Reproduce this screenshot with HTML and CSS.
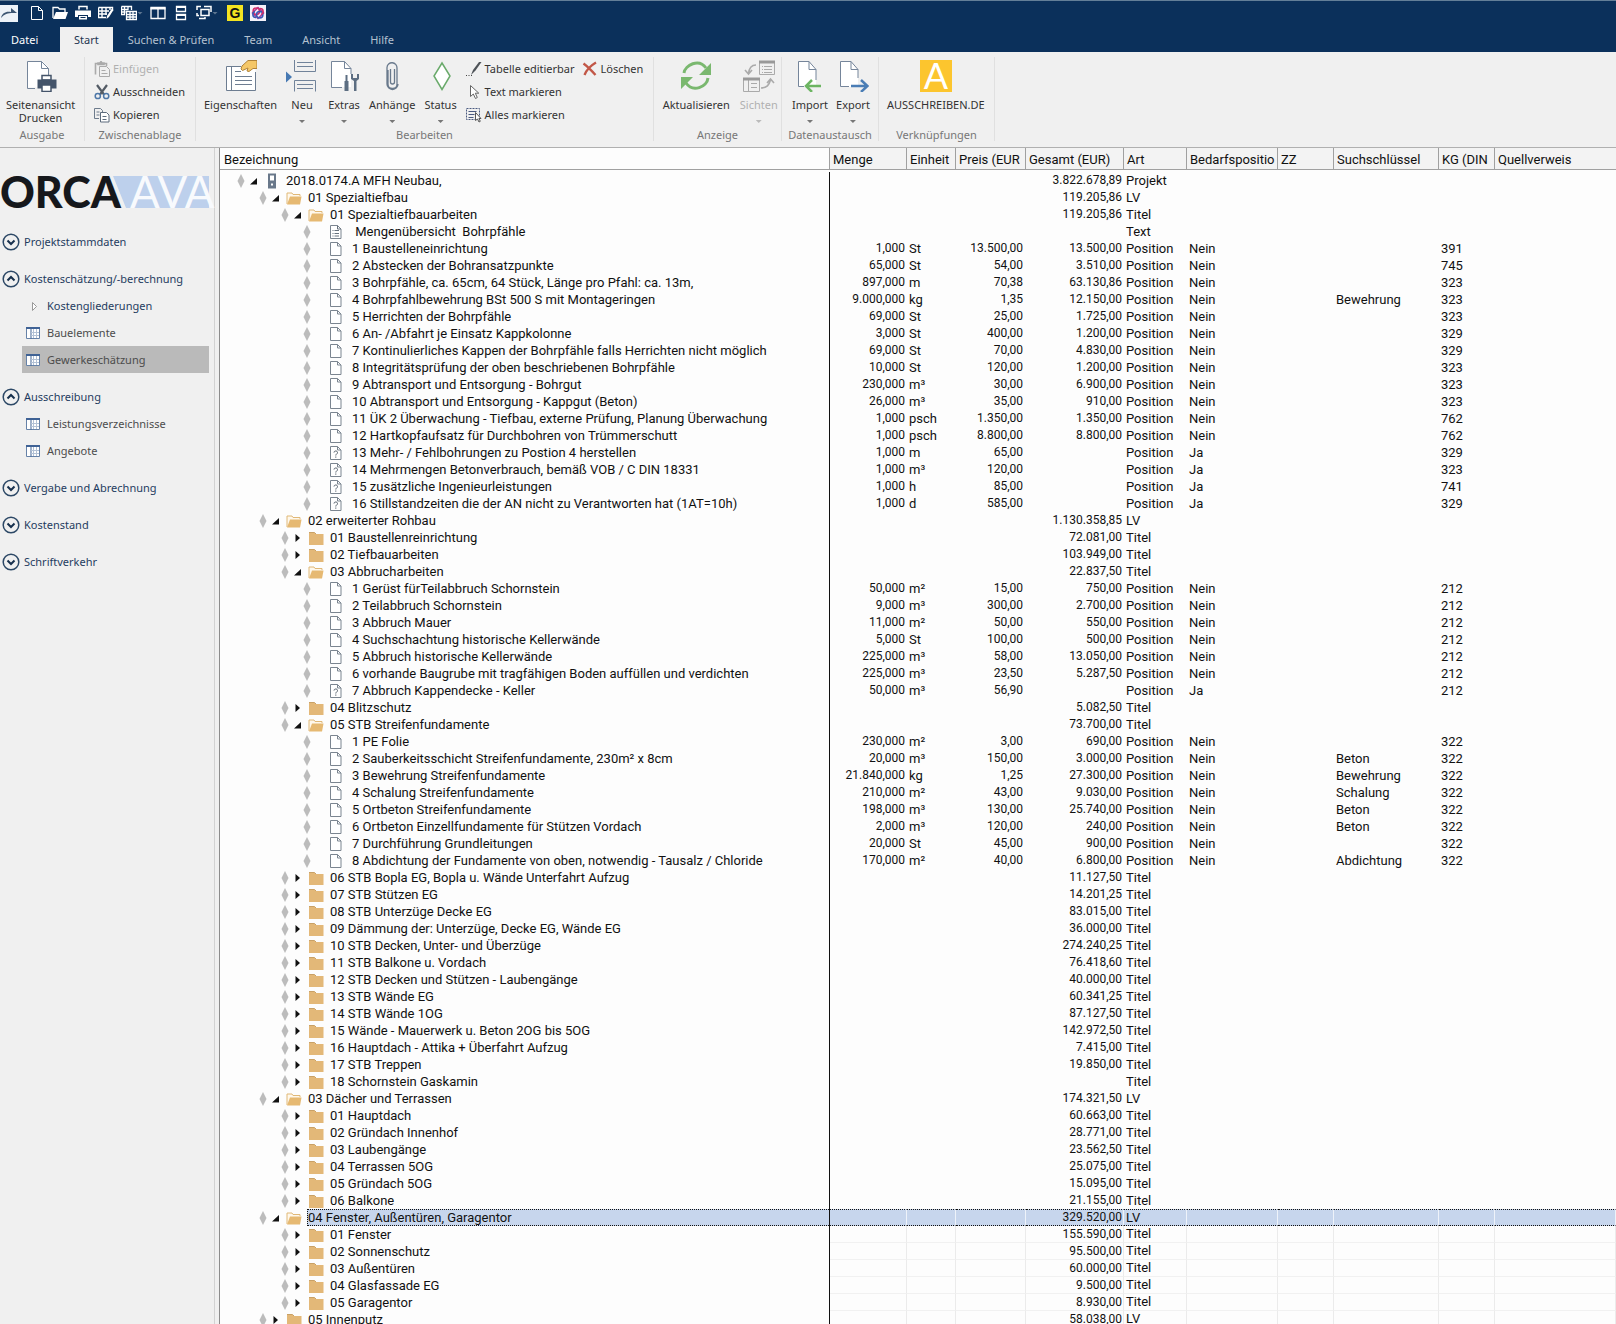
FILE: index.html
```html
<!DOCTYPE html>
<html lang="de">
<head>
<meta charset="utf-8">
<title>ORCA AVA</title>
<link rel="stylesheet" href="styles.css">
</head>
<body>
<svg class="sprite" aria-hidden="true">
  <symbol id="i-open" viewBox="0 0 16 16"><path d="M1 14V3h5l1 1.5h7V6" fill="#fff8ec" stroke="#e0b877"/><path d="M1 14.5 4 6.5h11.5L14 14.5z" fill="#e6b972"/></symbol>
  <symbol id="i-folder" viewBox="0 0 16 16"><path d="M1 2.500h5.500L8 4h7.500v11H1z" fill="#e3b878"/><path d="M1 2.500h5.500L8 4" fill="none" stroke="#c9a166"/></symbol>
  <symbol id="i-doc" viewBox="0 0 16 16"><path d="M.5 1.500h7l3.500 3.500v9.500H.5z" fill="#fff" stroke="#7b8590"/><path d="M7.500 1.500V5H11" fill="none" stroke="#7b8590"/></symbol>
  <symbol id="i-ask" viewBox="0 0 16 16"><path d="M.5 1.500h7l3.500 3.500v9.500H.5z" fill="#fff" stroke="#7b8590"/><path d="M7.500 1.500V5H11" fill="none" stroke="#7b8590"/><path d="M4 7.500c0-2 3.500-2 3.500 0C7.500 9 5.800 9 5.800 10.500M5.800 11.500v1.200" fill="none" stroke="#4f5a66"/></symbol>
  <symbol id="i-text" viewBox="0 0 16 16"><path d="M.5 1.500h7l3.500 3.500v9.500H.5z" fill="#fff" stroke="#7b8590"/><path d="M7.500 1.500V5H11M2.500 6.500h1m1 0h4.500m-6.500 3h1m1 0h4.500m-6.500 2.500h1m1 0h4.500" fill="none" stroke="#66717d"/></symbol>
  <symbol id="i-project" viewBox="0 0 16 16"><path d="M4 .5h8v15H4z" fill="#69788a"/><path d="M6 2.500h4v5H6z" fill="#fff"/><path d="M7 10.500h2v2H7z" fill="#fff"/></symbol>
  <symbol id="i-gem" viewBox="0 0 8 14"><path d="M4 0 7.500 7 4 14 .5 7z" fill="#bcbcbc"/></symbol>
  <symbol id="i-expanded" viewBox="0 0 7 8"><path d="M7 1v6.500H0z" fill="#111"/></symbol>
  <symbol id="i-collapsed" viewBox="0 0 7 8"><path d="M1.500 0 6 4 1.500 8z" fill="#111"/></symbol>
  <symbol id="i-down" viewBox="0 0 18 18"><circle cx="9" cy="9" r="7.800" fill="none" stroke="#2c4866" stroke-width="1.500"/><path d="m5.500 7.500 3.500 3.500 3.500-3.500" fill="none" stroke="#17304d" stroke-width="2"/></symbol>
  <symbol id="i-up" viewBox="0 0 18 18"><circle cx="9" cy="9" r="7.800" fill="none" stroke="#2c4866" stroke-width="1.500"/><path d="m5.500 10.500 3.500-3.500 3.500 3.500" fill="none" stroke="#17304d" stroke-width="2"/></symbol>
  <symbol id="i-list" viewBox="0 0 14 12"><path d="M.5 1h13v10.500H.5z" fill="#fff" stroke="#6682a8"/><path d="M0 1h14" stroke="#3f6295" stroke-width="2"/><path d="M5 2v9.500" stroke="#3f6295"/><path d="M7.500 2v9M10.500 2v9M5 5.500h8M5 8.500h8" stroke="#b3c2d6"/></symbol>
</svg>

<div class="app">
  <header class="top">
    <div class="quick">
      <span class="app-mark"><svg viewBox="0 0 18 18" width="18" height="18"><path d="M0 1h18v17H0z" fill="#edf2f8"/><path d="M1 14c1-5 5-7 10-6V4l6 5h-4C8 9 4 10 1 14z" fill="#3d5673"/></svg></span>
      <button title="Neu"><svg viewBox="0 0 16 16"><path d="M2.500 1.500h7l4 4v9h-11zM9.500 1.500v4h4" fill="none" stroke="#fff"/></svg></button>
      <button title="Öffnen"><svg viewBox="0 0 16 16"><path d="M1 13V2.500h5L7.500 4H13v3" fill="none" stroke="#fff" stroke-width="1.300"/><path d="M1 14 4 7h12l-2.500 7z" fill="#fff"/></svg></button>
      <button title="Drucken"><svg viewBox="0 0 16 16"><path d="M4 4.500V1.500h8v3" fill="none" stroke="#fff" stroke-width="1.500"/><path d="M0 5.500h16V12h-3v-2H3v2H0zM4 11h8v3.500H4z" fill="#fff"/><path d="M5.500 12.500h5" stroke="#0d305b"/></svg></button>
      <button title="Tabelle bearbeiten"><svg viewBox="0 0 16 16"><path d="M.5 2.500h14v3M.5 2.500v10H8M.5 6H11M.5 9H9M4 2.500v10M8 2.500V10M12 2.500V5" fill="none" stroke="#fff" stroke-width="1.400"/><path d="M15.500 5 11 12l-2.500 2L9 11l4.500-7z" fill="#fff"/></svg></button>
      <button title="Tabelle kopieren"><svg viewBox="0 0 16 16"><path d="M.5 1.500h10V5M.5 1.500v8H4M.5 4.500h7M.5 7h4M3.500 1.500v8M7 1.500V5M5.500 6.500h10v8h-10zM5.500 9.500h10M5.500 12h10M9 6.500v8M12 6.500v8" fill="none" stroke="#fff" stroke-width="1.300"/></svg><i class="caret"></i></button>
      <button title="Nebeneinander"><svg viewBox="0 0 16 16"><path d="M1 2.500h14v11H1zM8 2.500v11" fill="none" stroke="#fff" stroke-width="1.300"/><path d="M.5 3.500h15" stroke="#fff" stroke-width="2"/></svg></button>
      <button title="Untereinander"><svg viewBox="0 0 16 16"><path d="M3.500 1.500h9v5h-9zM3.500 9.500h9v5h-9z" fill="none" stroke="#fff" stroke-width="1.300"/><path d="M3 2h10M3 10h10" stroke="#fff" stroke-width="2"/></svg></button>
      <button title="Fenster anordnen"><svg viewBox="0 0 16 16"><path d="M5 4.500h8v6H5zM1 5V1.500h4M8 1.500h7V7M1 8v2.500h2M3 13.500h6V12" fill="none" stroke="#fff" stroke-width="1.500"/></svg><i class="caret"></i></button>
      <button title="GAEB" class="g-mark">G</button>
      <button title="IFC"><svg viewBox="0 0 16 16"><path d="M0 0h16v16H0z" fill="#f4f2fa"/><g fill="none" stroke-width="1.500"><path d="M8 2.500 13.500 8 8 13.500 2.500 8z" stroke="#a23a9c"/><circle cx="6.300" cy="6.300" r="3.200" stroke="#d22c6a"/><circle cx="9.700" cy="9.700" r="3.200" stroke="#3a57b4"/><path d="M10 3.500c4 0 4 5 1 6" stroke="#d22c6a"/><path d="M6 12.500c-4 0-4-5-1-6" stroke="#3a57b4"/></g></svg></button>
    </div>
    <nav class="tabs">
      <a href="#" class="file">Datei</a><a href="#" class="active">Start</a><a href="#">Suchen &amp; Prüfen</a><a href="#">Team</a><a href="#">Ansicht</a><a href="#">Hilfe</a>
    </nav>
  </header>

  <div class="ribbon">
    <section class="group g-output">
      <div class="tools">
        <button class="big"><svg viewBox="0 0 32 32"><path d="M2.500 1.500h15l6 6v20h-21z" fill="#fff"/><path d="M10 28.500H2.500v-27h14l7 7V15M16.500 1.500v7h7" fill="none" stroke="#75859a"/><path d="M17 15.500h9V20h-9z" fill="#fff" stroke="#44546a" stroke-width="1.500"/><path d="M12.500 19.500h19v9h-19z" fill="#44546a"/><path d="M17 25h9v6.500h-9z" fill="#fff" stroke="#44546a" stroke-width="1.500"/></svg><span>Seitenansicht<br>Drucken</span></button>
      </div>
      <h2>Ausgabe</h2>
    </section>
    <section class="group g-clip">
      <div class="tools stack">
        <button class="small" disabled><svg viewBox="0 0 16 16"><path d="M1.500 13.500v-11h11V5M4 3.500V2h2l1-1.500L8 2h2v1.500z" fill="none" stroke="#aaa" stroke-width="1.600"/><path d="M5.500 5.500h7l3 3v7h-10zM7.500 9.500h4m-4 3h6" fill="#f0f0f0" stroke="#aaa"/></svg>Einfügen</button>
        <button class="small"><svg viewBox="0 0 16 16"><path d="m3 1 7 9.500M13 1 6 10.500" stroke="#535b65" stroke-width="2.200"/><circle cx="3.800" cy="12" r="2.600" fill="none" stroke="#4d77a8" stroke-width="1.500"/><circle cx="12.200" cy="12" r="2.600" fill="none" stroke="#4d77a8" stroke-width="1.500"/></svg>Ausschneiden</button>
        <button class="small"><svg viewBox="0 0 16 16"><path d="M5 11.500H.5v-10h6l2 2V5M2.500 5h3m-3 3h3" fill="none" stroke="#6d7b8c"/><path d="M6.500 5.500h6l2.500 2.500v7H6.500zM8.500 9.500h4m-4 3h4" fill="#fff" stroke="#5d6b7c"/></svg>Kopieren</button>
      </div>
      <h2>Zwischenablage</h2>
    </section>
    <section class="group g-edit">
      <div class="tools">
        <button class="big"><svg viewBox="0 0 32 32"><path d="M1.500 6.500h29v24h-29z" fill="#fff"/><path d="M16 6.500H1.500v24h29V12M6.500 6.500v24M10 11.500h6m-6 5h17m-17 4h17m-17 4h17" fill="none" stroke="#6d7d91"/><path d="M32 .5H23l-6 5.500-1 3 1.500 1.500L23 8l-1 3 2 .5 4-3h4z" fill="#f5c767" stroke="#b08339"/></svg><span>Eigenschaften</span></button>
        <button class="big"><svg viewBox="0 0 32 32"><path d="M0 11.500 6 17l-6 5.500z" fill="#4779b3"/><path d="M8.500 0v11.500h21V0M11 2.500h16m-16 4h16M8.500 31.500v-11h21v11M11 24.500h16m-16 4h16" fill="none" stroke="#71839a"/></svg><span>Neu</span><i class="caret"></i></button>
        <button class="big"><svg viewBox="0 0 32 32"><path d="M3.500 1.500H16l7 7V27h-19.500z" fill="#fff"/><path d="M14 27.500H3.500v-26h13l6.500 7V14M16.500 1.500v7H23" fill="none" stroke="#75859a"/><path d="M18.500 15v6" stroke="#5d6e82" stroke-width="2"/><path d="M18.500 21v10" stroke="#5d6e82" stroke-width="4"/><path d="M26 31V21l-3-2v-5l2 0v4h4v-4h2v5l-2.500 2v10z" fill="#5d6e82"/></svg><span>Extras</span><i class="caret"></i></button>
        <button class="big"><svg viewBox="0 0 32 32"><path d="M12 10v14a4.500 4.500 0 0 0 9 0V8a5 5 0 0 0-10-.5V24a5.500 5.500 0 0 0 11 0M18.500 9v13a2 2 0 0 1-4 0V9" fill="none" stroke="#69798c" stroke-width="1.300"/></svg><span>Anhänge</span><i class="caret"></i></button>
        <button class="big"><svg viewBox="0 0 32 32"><path d="M17 3 25 16 17 29.500 9 16z" fill="#fff" stroke="#6aaa6b" stroke-width="1.500"/></svg><span>Status</span><i class="caret"></i></button>
        <div class="stack">
          <button class="small"><svg viewBox="0 0 16 16"><path d="M0 14.500h7" stroke="#444" stroke-dasharray="1 1.500"/><path d="M15.500 1 9.500 9.500 5 14l2-5 6-8z" fill="#4e5358"/></svg>Tabelle editierbar</button>
          <button class="small"><svg viewBox="0 0 16 16"><path d="M4.500 1.500v11l2.800-2.500 2.200 4.500 1.800-1-2-4.300h3.500z" fill="#fff" stroke="#666"/></svg>Text markieren</button>
          <button class="small"><svg viewBox="0 0 16 16"><path d="M.5 1.500h13v11H.5z" fill="none" stroke="#4a5a80" stroke-dasharray="2 1"/><path d="M2.500 4.500h8m-8 3h6m-6 3h5" stroke="#4a5a80"/><path d="M9.500 5.500v8l2-1.500 1.500 3 1.300-.7-1.400-2.800H15z" fill="#fff" stroke="#555"/></svg>Alles markieren</button>
        </div>
        <div class="stack">
          <button class="small"><svg viewBox="0 0 16 16"><path d="M1.500 2.500c4 3 8 7 12 11.500M14 1.500C8 5 4 10 2.500 14" fill="none" stroke="#c25747" stroke-width="2.300"/></svg>Löschen</button>
        </div>
      </div>
      <h2>Bearbeiten</h2>
    </section>
    <section class="group g-view">
      <div class="tools">
        <button class="big"><svg viewBox="0 0 32 32"><path d="M4 13C5 5 19-2 26 8M28 18c-1 9-15 15-22 5" fill="none" stroke="#7ab86f" stroke-width="3"/><path d="M31 3v12H19zM1 29V17h12z" fill="#7ab86f"/></svg><span>Aktualisieren</span></button>
        <button class="big" disabled><svg viewBox="0 0 32 32"><path d="M16.500 1.500h15v13h-15zM.500 18.500h16v13H.500zM5.500 18.500v13M8 23.500h6m-6 4h6M19 6.500h1m1 0h8m-10 3h1m1 0h8m-10 3h1m1 0h8" fill="none" stroke="#aaa"/><path d="M16 2h16M0 19h17" stroke="#999" stroke-width="3"/><path d="M13 5C8 5 6 8 5.500 14M2 10l3.500 4L9 10M18 28c6 0 8-3 9.500-8M24 23l3.500-4 3.500 4" fill="none" stroke="#aaa" stroke-width="1.600"/></svg><span>Sichten</span><i class="caret"></i></button>
      </div>
      <h2>Anzeige</h2>
    </section>
    <section class="group g-data">
      <div class="tools">
        <button class="big"><svg viewBox="0 0 32 32"><path d="M4.500 1.500H15l7 8V27H4.500z" fill="#fff"/><path d="M10 26.500H4.500v-25h10.500l7 8V20M15 1.500v8h7" fill="none" stroke="#75859a"/><path d="M27 26H12M18 20l-6 6 6 6" fill="none" stroke="#6db562" stroke-width="2.500"/></svg><span>Import</span><i class="caret"></i></button>
        <button class="big"><svg viewBox="0 0 32 32"><path d="M3.500 1.500H14l7 8V27H3.500z" fill="#fff"/><path d="M12 26.500H3.500v-25H14l7 8V18M14 1.500v8h7" fill="none" stroke="#75859a"/><path d="M14 26h16M24 20l6.500 6-6.500 6" fill="none" stroke="#4a7db5" stroke-width="2.500"/></svg><span>Export</span><i class="caret"></i></button>
      </div>
      <h2>Datenaustausch</h2>
    </section>
    <section class="group g-link">
      <div class="tools">
        <button class="big"><span class="a-mark">A</span><span>AUSSCHREIBEN.DE</span></button>
      </div>
      <h2>Verknüpfungen</h2>
    </section>
  </div>

  <div class="work">
    <aside class="side">
      <svg class="logo" viewBox="0 0 207 32" role="img" aria-label="ORCA AVA">
        <path d="M111 0h96v32H124z" fill="#bdd0ec"/>
        <text x="-2" y="32" class="logo-orca">ORCA</text>
        <text x="128" y="32" class="logo-ava">AVA</text>
      </svg>
      <nav>
        <a href="#" class="head"><svg><use href="#i-down"/></svg>Projektstammdaten</a>
        <a href="#" class="head"><svg><use href="#i-up"/></svg>Kostenschätzung/-berechnung</a>
        <a href="#" class="sub navy"><svg viewBox="0 0 14 12"><path d="m6.500 2.500 4 4-4 4z" fill="#fff" stroke="#999"/></svg>Kostengliederungen</a>
        <a href="#" class="sub"><svg><use href="#i-list"/></svg>Bauelemente</a>
        <a href="#" class="sub current"><svg><use href="#i-list"/></svg>Gewerkeschätzung</a>
        <a href="#" class="head"><svg><use href="#i-up"/></svg>Ausschreibung</a>
        <a href="#" class="sub"><svg><use href="#i-list"/></svg>Leistungsverzeichnisse</a>
        <a href="#" class="sub"><svg><use href="#i-list"/></svg>Angebote</a>
        <a href="#" class="head"><svg><use href="#i-down"/></svg>Vergabe und Abrechnung</a>
        <a href="#" class="head"><svg><use href="#i-down"/></svg>Kostenstand</a>
        <a href="#" class="head"><svg><use href="#i-down"/></svg>Schriftverkehr</a>
      </nav>
    </aside>
    <main class="sheet">
      <table>
        <colgroup><col class="c-name"><col class="c-menge"><col class="c-einheit"><col class="c-preis"><col class="c-gesamt"><col class="c-art"><col class="c-bedarf"><col class="c-zz"><col class="c-such"><col class="c-kg"><col></colgroup>
        <thead><tr><th>Bezeichnung</th><th>Menge</th><th>Einheit</th><th>Preis (EUR</th><th>Gesamt (EUR)</th><th>Art</th><th>Bedarfspositio</th><th>ZZ</th><th>Suchschlüssel</th><th>KG (DIN</th><th>Quellverweis</th></tr></thead>
        <tbody id="rows"></tbody>
      </table>
    </main>
  </div>
</div>
<script src="app.js"></script>
</body>
</html>
```
FILE: styles.css
```css
* { box-sizing: border-box; }
body { margin: 0; background: #f0f0f0; color: #333; font: 11px/13px "Noto Sans", "Open Sans", sans-serif; }
button { margin: 0; padding: 0; border: 0; background: none; color: inherit; font: inherit; }
a { color: inherit; text-decoration: none; }
h2 { margin: 0; font: inherit; }
svg { flex: none; }
.sprite { position: absolute; width: 0; height: 0; }
.app { display: flex; flex-direction: column; height: 100vh; overflow: hidden; }

.top { background: #0b305b; border-top: 1px solid #647f98; color: #b4c1d0; }
.quick { display: flex; align-items: center; gap: 7px; height: 24px; }
.quick button { display: flex; align-items: center; height: 16px; color: #fff; }
.quick svg { width: 16px; height: 16px; }
.app-mark { display: flex; margin-right: 4px; }
.app-mark svg { width: 18px; height: 18px; }
.caret { flex: none; width: 6px; height: 3px; background: #777; clip-path: polygon(0 0, 100% 0, 50% 100%); }
.quick .caret { background: #5d7590; }
.quick .g-mark { justify-content: center; width: 16px; margin-left: 2px; background: #f3e321; color: #111; font: 700 14px/16px "Liberation Sans", sans-serif; }
.tabs { display: flex; height: 27px; padding-top: 2px; }
.tabs a { padding: 0 15px; line-height: 26px; }
.tabs .file { width: 50px; margin-right: 10px; padding: 0 11px; color: #fff; }
.tabs .active { padding: 0 14px; background: #f0f0f0; color: #1d3550; }

.ribbon { display: flex; flex: none; height: 96px; border-bottom: 1px solid #b0b0b0; }
.group { display: flex; flex: none; flex-direction: column; margin: 5px 0 6px; border-right: 1px solid #e0e0e0; }
.group h2 { color: #777; text-align: center; }
.tools { display: flex; flex: 1; padding-left: 4px; }
.g-output { width: 85px; }
.g-output .tools { padding-left: 2px; }
.g-clip { width: 111px; }
.g-edit { width: 458px; }
.g-view { width: 128px; }
.g-view .tools, .g-data .tools { padding-left: 6px; }
.g-view .tools { gap: 4px; }
.g-data { width: 97px; }
.g-link { width: 116px; }
.big { display: flex; flex-direction: column; align-items: center; align-self: flex-start; min-width: 42px; padding: 3px 4px 0; }
.big svg, .a-mark { width: 32px; height: 32px; margin-bottom: 6px; }
.big .caret { margin-top: 9px; }
.big span { white-space: nowrap; }
.big .a-mark { background: #fcc52e; color: #fff; font: 400 36px/31px Lato, sans-serif; }
.stack { display: flex; flex-direction: column; }
.g-clip .stack { padding-left: 9px; }
.small { display: flex; align-items: center; gap: 3px; height: 23px; white-space: nowrap; }
.g-edit .stack { padding-left: 4px; }
.g-edit .stack + .stack { padding-left: 7px; }
.small svg { width: 16px; height: 16px; }
button:disabled { color: #b0b0b0; }
button:disabled .caret { background: #bbb; }

.work { display: flex; flex: 1; min-height: 0; }
.side { flex: none; width: 215px; padding: 28px 5px 0 2px; border-right: 1px solid #d2d2d2; }
.logo { display: block; width: 207px; height: 32px; margin-bottom: 20px; overflow: visible; }
.logo-orca { fill: #16181c; font: 900 43px Lato, sans-serif; }
.logo-ava { fill: #f8fafd; font: 400 44px Lato, sans-serif; }
.side a { display: flex; align-items: center; height: 27px; }
.head { gap: 4px; margin-top: 10px; color: #1f3c60; }
.head svg { width: 18px; height: 18px; }
.sub { gap: 7px; margin-left: 20px; padding-left: 4px; color: #4c4c4c; }
.sub svg { width: 14px; height: 12px; }
.side .navy { color: #1f3c60; }
.side .current { background: #bababa; }

.sheet { flex: 1; min-width: 0; margin-left: 4px; overflow: hidden; background: #fdfdfd; border-left: 1px solid #8c8c8c; color: #111; font: 13px/17px Roboto, sans-serif; }
table { width: 100%; table-layout: fixed; border-spacing: 0; }
.c-name { width: 610px; }
.c-menge { width: 77px; }
.c-einheit { width: 49px; }
.c-preis { width: 70px; }
.c-gesamt { width: 98px; }
.c-art { width: 63px; }
.c-bedarf { width: 91px; }
.c-zz { width: 56px; }
.c-such { width: 105px; }
.c-kg { width: 56px; }
th, td { overflow: hidden; padding: 0 3px; text-align: left; font-weight: 400; white-space: nowrap; }
th { height: 22px; padding-top: 3px; background: #f3f3f3; border-right: 1px solid #a0a0a0; border-bottom: 1px solid #a0a0a0; line-height: 18px; }
th:first-child { padding-left: 4px; background: #fdfdfd; }
th:last-child { border-right: 0; }
tbody::before { content: ""; display: block; height: 2px; }
td { height: 17px; }
td + td { padding-left: 2px; border-right: 1px solid transparent; }
td:first-child { padding: 0; border-right: 1px solid #111; }
td.num { text-align: right; font-size: 12px; padding-right: 2px; }
td.menge, td.gesamt { padding-right: 1px; }
.node { display: flex; align-items: center; height: 17px; padding-left: 17px; }
.node.level1 { padding-left: 39px; }
.node.level2 { padding-left: 61px; }
.node.level3 { padding-left: 83px; }
.gem { width: 8px; height: 14px; }
.twist { width: 7px; height: 8px; margin: 0 7px 0 5px; }
.icon { width: 16px; height: 16px; margin-right: 5px; }
.label { flex: 1; height: 17px; padding-left: 1px; line-height: 17px; white-space: pre; }
.selected td + td, .selected .label { background: #c7d6ed; border-top: 1px dotted #111; border-bottom: 1px dotted #111; line-height: 15px; }
.selected .label { border-left: 1px dotted #111; padding-left: 0; }
.selected td + td { border-right-color: #eef3fa; }
.selected ~ tr td + td { border-right-color: #ebebeb; border-bottom: 1px solid #f1f1f1; line-height: 16px; }
```
FILE: app.js
```js
// One line per tree row:
// level | icon | text | Menge | Einheit | Preis | Gesamt | Art | Bedarf | Suchschlüssel | KG
const data = `
0|project|2018.0174.A MFH Neubau,||||3.822.678,89|Projekt
1|open|01 Spezialtiefbau||||119.205,86|LV
2|open|01 Spezialtiefbauarbeiten||||119.205,86|Titel
3|text| Mengenübersicht  Bohrpfähle|||||Text
3|doc|1 Baustelleneinrichtung|1,000|St|13.500,00|13.500,00|Position|Nein||391
3|doc|2 Abstecken der Bohransatzpunkte|65,000|St|54,00|3.510,00|Position|Nein||745
3|doc|3 Bohrpfähle, ca. 65cm, 64 Stück, Länge pro Pfahl: ca. 13m,|897,000|m|70,38|63.130,86|Position|Nein||323
3|doc|4 Bohrpfahlbewehrung BSt 500 S mit Montageringen|9.000,000|kg|1,35|12.150,00|Position|Nein|Bewehrung|323
3|doc|5 Herrichten der Bohrpfähle|69,000|St|25,00|1.725,00|Position|Nein||323
3|doc|6 An- /Abfahrt je Einsatz Kappkolonne|3,000|St|400,00|1.200,00|Position|Nein||329
3|doc|7 Kontinulierliches Kappen der Bohrpfähle falls Herrichten nicht möglich|69,000|St|70,00|4.830,00|Position|Nein||329
3|doc|8 Integritätsprüfung der oben beschriebenen Bohrpfähle|10,000|St|120,00|1.200,00|Position|Nein||323
3|doc|9 Abtransport und Entsorgung - Bohrgut|230,000|m³|30,00|6.900,00|Position|Nein||323
3|doc|10 Abtransport und Entsorgung - Kappgut (Beton)|26,000|m³|35,00|910,00|Position|Nein||323
3|doc|11 ÜK 2 Überwachung - Tiefbau, externe Prüfung, Planung Überwachung|1,000|psch|1.350,00|1.350,00|Position|Nein||762
3|doc|12 Hartkopfaufsatz für Durchbohren von Trümmerschutt|1,000|psch|8.800,00|8.800,00|Position|Nein||762
3|ask|13 Mehr- / Fehlbohrungen zu Postion 4 herstellen|1,000|m|65,00||Position|Ja||329
3|ask|14 Mehrmengen Betonverbrauch, bemäß VOB / C DIN 18331|1,000|m³|120,00||Position|Ja||323
3|ask|15 zusätzliche Ingenieurleistungen|1,000|h|85,00||Position|Ja||741
3|ask|16 Stillstandzeiten die der AN nicht zu Verantworten hat (1AT=10h)|1,000|d|585,00||Position|Ja||329
1|open|02 erweiterter Rohbau||||1.130.358,85|LV
2|folder|01 Baustellenreinrichtung||||72.081,00|Titel
2|folder|02 Tiefbauarbeiten||||103.949,00|Titel
2|open|03 Abbrucharbeiten||||22.837,50|Titel
3|doc|1 Gerüst fürTeilabbruch Schornstein|50,000|m²|15,00|750,00|Position|Nein||212
3|doc|2 Teilabbruch Schornstein|9,000|m³|300,00|2.700,00|Position|Nein||212
3|doc|3 Abbruch Mauer|11,000|m²|50,00|550,00|Position|Nein||212
3|doc|4 Suchschachtung historische Kellerwände|5,000|St|100,00|500,00|Position|Nein||212
3|doc|5 Abbruch historische Kellerwände|225,000|m³|58,00|13.050,00|Position|Nein||212
3|doc|6 vorhande Baugrube mit tragfähigen Boden auffüllen und verdichten|225,000|m³|23,50|5.287,50|Position|Nein||212
3|ask|7 Abbruch Kappendecke - Keller|50,000|m³|56,90||Position|Ja||212
2|folder|04 Blitzschutz||||5.082,50|Titel
2|open|05 STB Streifenfundamente||||73.700,00|Titel
3|doc|1 PE Folie|230,000|m²|3,00|690,00|Position|Nein||322
3|doc|2 Sauberkeitsschicht Streifenfundamente, 230m² x 8cm|20,000|m³|150,00|3.000,00|Position|Nein|Beton|322
3|doc|3 Bewehrung Streifenfundamente|21.840,000|kg|1,25|27.300,00|Position|Nein|Bewehrung|322
3|doc|4 Schalung Streifenfundamente|210,000|m²|43,00|9.030,00|Position|Nein|Schalung|322
3|doc|5 Ortbeton Streifenfundamente|198,000|m³|130,00|25.740,00|Position|Nein|Beton|322
3|doc|6 Ortbeton Einzellfundamente für Stützen Vordach|2,000|m³|120,00|240,00|Position|Nein|Beton|322
3|doc|7 Durchführung Grundleitungen|20,000|St|45,00|900,00|Position|Nein||322
3|doc|8 Abdichtung der Fundamente von oben, notwendig - Tausalz / Chloride|170,000|m²|40,00|6.800,00|Position|Nein|Abdichtung|322
2|folder|06 STB Bopla EG, Bopla u. Wände Unterfahrt Aufzug||||11.127,50|Titel
2|folder|07 STB Stützen EG||||14.201,25|Titel
2|folder|08 STB Unterzüge Decke EG||||83.015,00|Titel
2|folder|09 Dämmung der: Unterzüge, Decke EG, Wände EG||||36.000,00|Titel
2|folder|10 STB Decken, Unter- und Überzüge||||274.240,25|Titel
2|folder|11 STB Balkone u. Vordach||||76.418,60|Titel
2|folder|12 STB Decken und Stützen - Laubengänge||||40.000,00|Titel
2|folder|13 STB Wände EG||||60.341,25|Titel
2|folder|14 STB Wände 1OG||||87.127,50|Titel
2|folder|15 Wände - Mauerwerk u. Beton 2OG bis 5OG||||142.972,50|Titel
2|folder|16 Hauptdach - Attika + Überfahrt Aufzug||||7.415,00|Titel
2|folder|17 STB Treppen||||19.850,00|Titel
2|folder|18 Schornstein Gaskamin|||||Titel
1|open|03 Dächer und Terrassen||||174.321,50|LV
2|folder|01 Hauptdach||||60.663,00|Titel
2|folder|02 Gründach Innenhof||||28.771,00|Titel
2|folder|03 Laubengänge||||23.562,50|Titel
2|folder|04 Terrassen 5OG||||25.075,00|Titel
2|folder|05 Gründach 5OG||||15.095,00|Titel
2|folder|06 Balkone||||21.155,00|Titel
1|open|04 Fenster, Außentüren, Garagentor||||329.520,00|LV
2|folder|01 Fenster||||155.590,00|Titel
2|folder|02 Sonnenschutz||||95.500,00|Titel
2|folder|03 Außentüren||||60.000,00|Titel
2|folder|04 Glasfassade EG||||9.500,00|Titel
2|folder|05 Garagentor||||8.930,00|Titel
1|folder|05 Innenputz||||58.038,00|LV`;

const selectedText = "04 Fenster, Außentüren, Garagentor";
const icon = (cls, name) => `<svg class="${cls}">${name ? `<use href="#i-${name}"/>` : ""}</svg>`;
const twist = { project: "expanded", open: "expanded", folder: "collapsed" };

document.getElementById("rows").innerHTML = data.trim().split("\n").map((line) => {
  const [level, kind, text, menge = "", einheit = "", preis = "", gesamt = "", art = "", bedarf = "", such = "", kg = ""] = line.split("|");
  return `<tr${text === selectedText ? ' class="selected"' : ""}>
    <td><div class="node level${level}">${icon("gem", "gem")}${icon("twist", twist[kind])}${icon("icon", kind)}<span class="label">${text}</span></div></td>
    <td class="num menge">${menge}</td><td>${einheit}</td><td class="num">${preis}</td><td class="num gesamt">${gesamt}</td>
    <td>${art}</td><td>${bedarf}</td><td></td><td>${such}</td><td>${kg}</td><td></td></tr>`;
}).join("");
```
